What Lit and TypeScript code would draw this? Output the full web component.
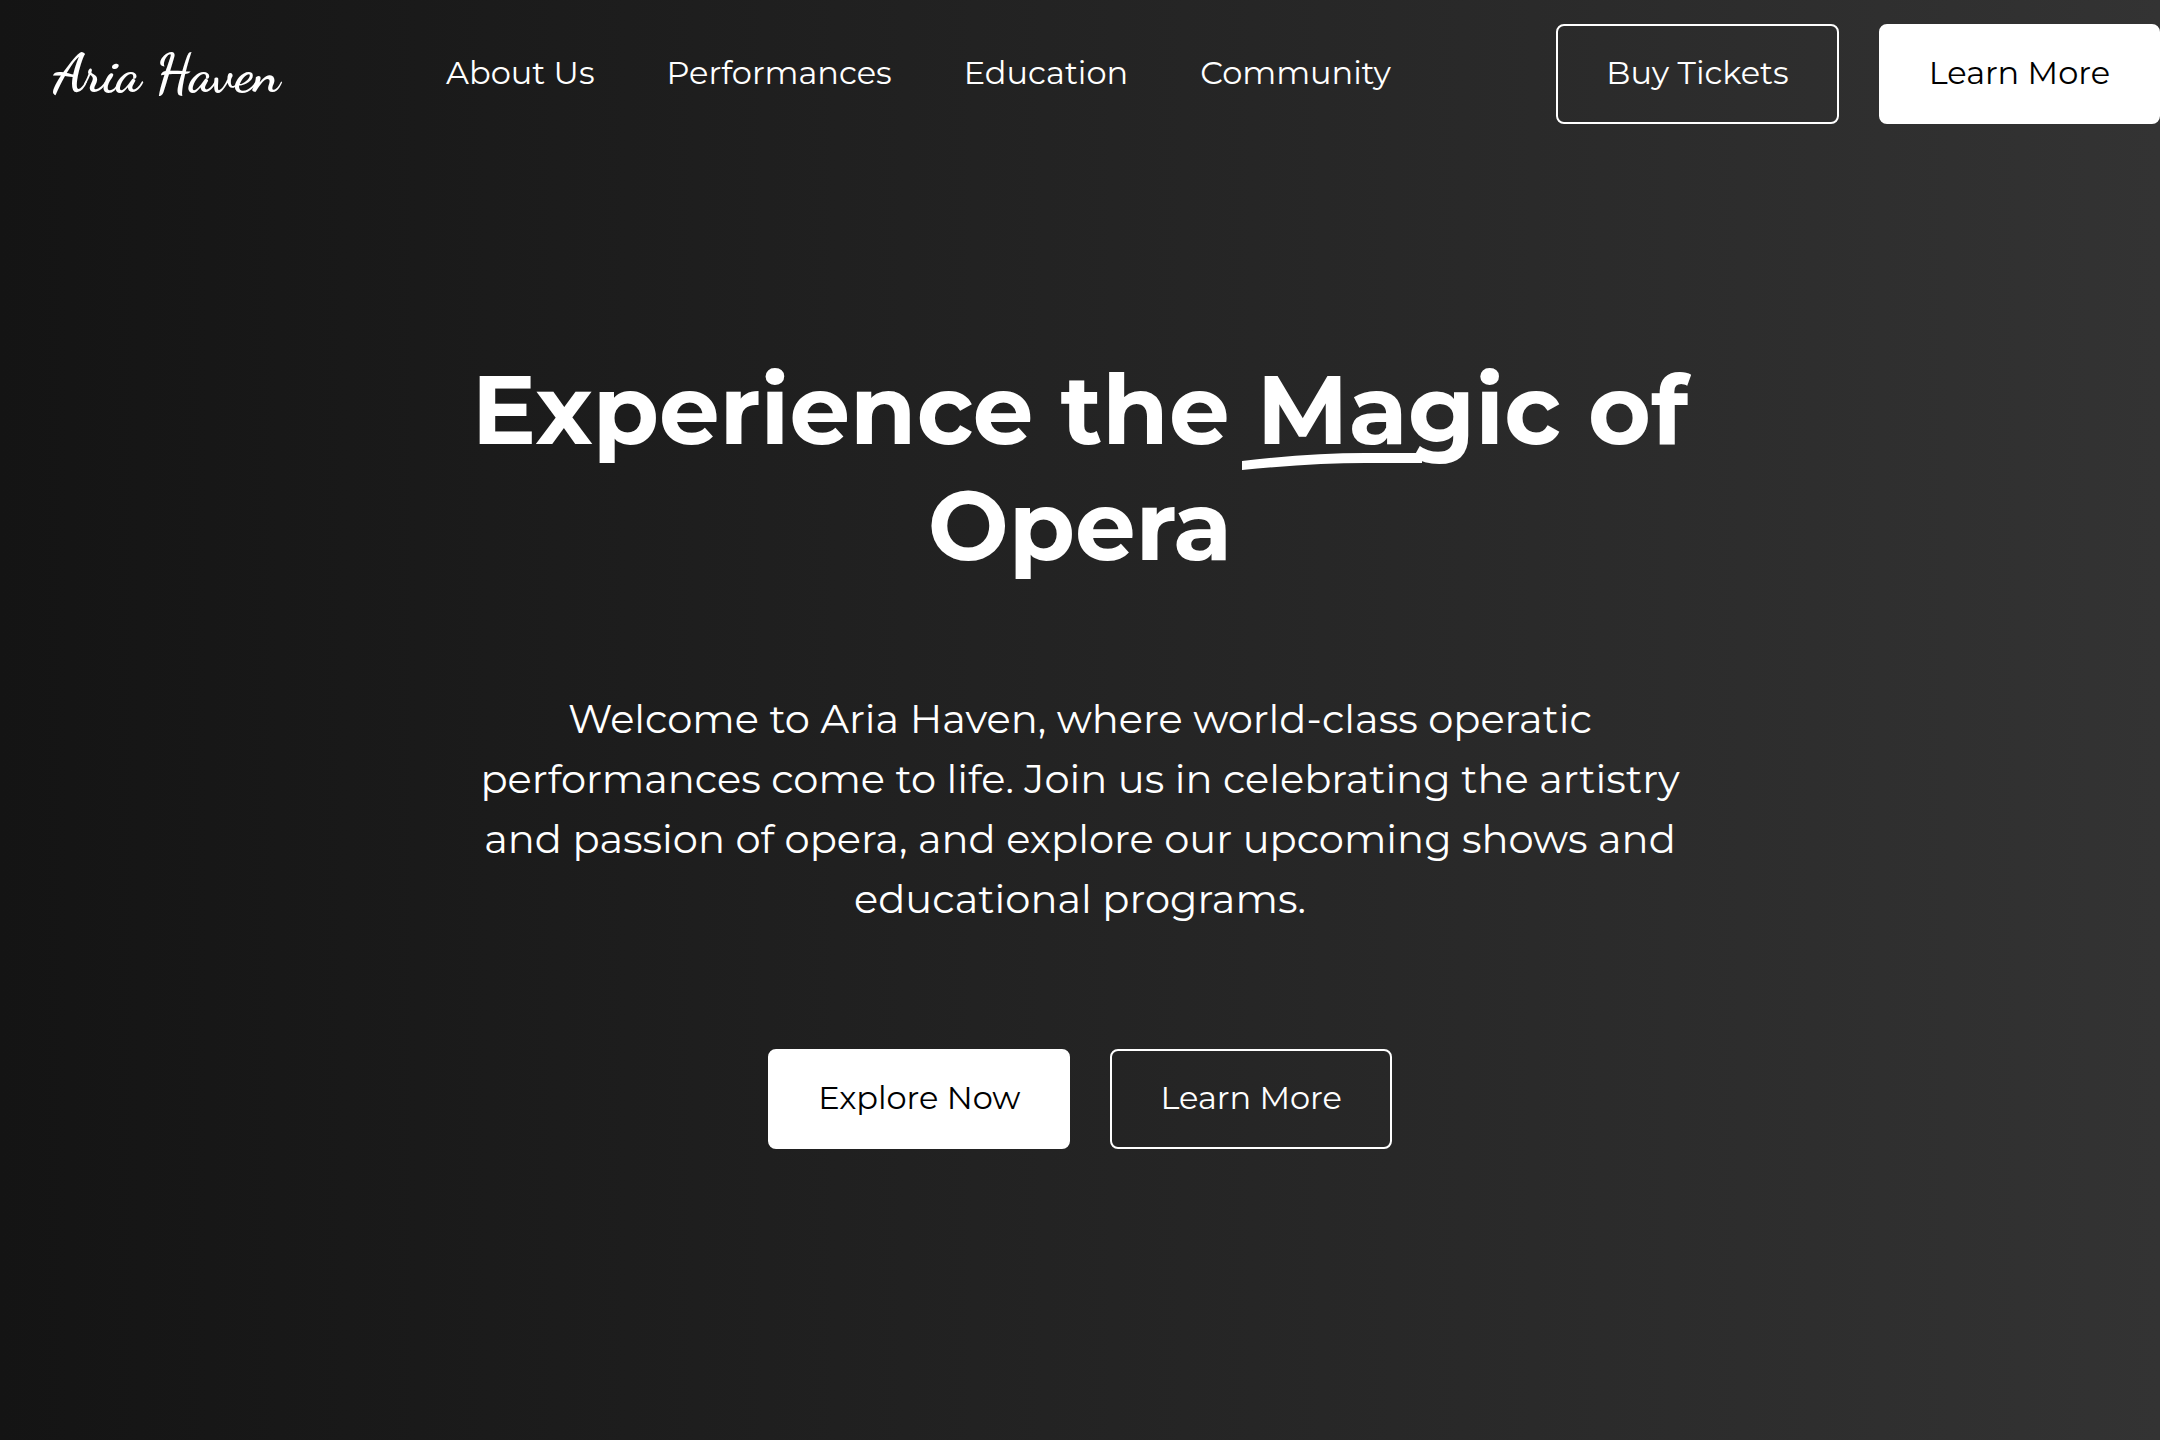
import { LitElement, html, css } from "lit";
import { customElement } from "lit/decorators.js";

const NAV = ["About Us", "Performances", "Education", "Community"];

@customElement("app-root")
export class AppRoot extends LitElement {
  static styles = css`
    :host {
      display: block;
      font-family: Montserrat, Inter, sans-serif;
      font-size: 32px;
      line-height: 48px;
      color: #fff;
    }
    .page {
      display: flex;
      flex-direction: column;
      min-height: 100vh;
      background: linear-gradient(90deg, #141414, #333);
    }
    .header {
      display: grid;
      grid-template-columns: 393px 1fr auto;
      align-items: center;
      padding: 24px 0 24px 53px;
    }
    .logo {
      font-family: "Dancing Script", cursive;
      font-size: 54px;
      font-weight: 700;
      line-height: 72px;
      white-space: nowrap;
    }
    a {
      color: inherit;
      text-decoration: none;
    }
    .nav {
      display: flex;
      gap: 72px;
      padding-bottom: 2px;
    }
    .actions {
      display: flex;
      gap: 40px;
    }
    .btn {
      box-sizing: border-box;
      height: 100px;
      padding: 0 48px 2px;
      border: 2px solid #fff;
      border-radius: 8px;
      background: transparent;
      color: #fff;
      font: inherit;
      white-space: nowrap;
    }
    .solid {
      background: #fff;
      color: #000;
    }
    .hero {
      display: flex;
      flex-direction: column;
      align-items: center;
      padding: 204px 48px 96px;
      text-align: center;
    }
    .title {
      margin: 0;
      font-size: 96px;
      line-height: 116px;
      font-weight: 700;
    }
    .marked {
      position: relative;
    }
    .swoosh {
      position: absolute;
      left: -15px;
      bottom: -3px;
      width: 180px;
      height: 18px;
    }
    .lead {
      margin: 105px 0 120px;
      font-size: 40px;
      line-height: 60px;
    }
  `;

  render() {
    return html`
      <div class="page">
        <header class="header">
          <a class="logo" href="#">Aria Haven</a>
          <nav class="nav">${NAV.map((label) => html`<a href="#">${label}</a>`)}</nav>
          <div class="actions">
            <button class="btn">Buy Tickets</button>
            <button class="btn solid">Learn More</button>
          </div>
        </header>
        <main class="hero">
          <h1 class="title">
            Experience the
            <span class="marked">Magic<svg class="swoosh" viewBox="0 0 180 18" aria-hidden="true">
              <path d="M0 8Q68 0 123 0H180V10H123Q72 10 0 17Z" fill="#fff" /></svg></span>
            of<br />Opera
          </h1>
          <p class="lead">
            Welcome to Aria Haven, where world-class operatic<br />
            performances come to life. Join us in celebrating the artistry<br />
            and passion of opera, and explore our upcoming shows and<br />
            educational programs.
          </p>
          <div class="actions">
            <button class="btn solid">Explore Now</button>
            <button class="btn">Learn More</button>
          </div>
        </main>
      </div>
    `;
  }
}
